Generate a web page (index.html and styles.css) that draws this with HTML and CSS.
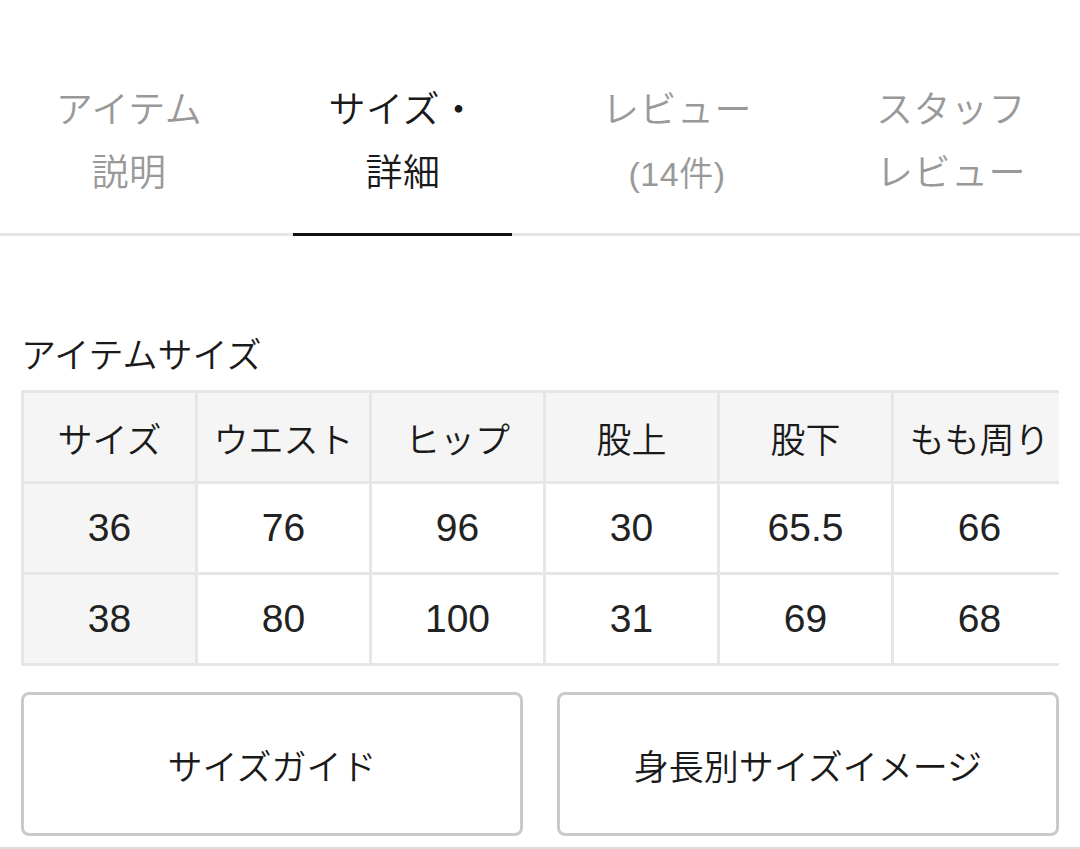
FILE: index.html
```html
<!DOCTYPE html>
<html lang="ja">
<head>
<meta charset="utf-8">
<title>サイズ・詳細</title>
<link rel="stylesheet" href="styles.css">
</head>
<body>
<nav class="tabs">
  <div class="tab">アイテム<br>説明</div>
  <div class="tab active">サイズ・<br>詳細</div>
  <div class="tab">レビュー<br><span class="count">(14件)</span></div>
  <div class="tab">スタッフ<br>レビュー</div>
</nav>
<section class="size-section">
  <h2 class="heading">アイテムサイズ</h2>
  <div class="table-wrap">
    <table class="size-table">
      <thead>
        <tr><th>サイズ</th><th>ウエスト</th><th>ヒップ</th><th>股上</th><th>股下</th><th>もも周り</th></tr>
      </thead>
      <tbody>
        <tr><th class="num">36</th><td>76</td><td>96</td><td>30</td><td>65.5</td><td>66</td></tr>
        <tr><th class="num">38</th><td>80</td><td>100</td><td>31</td><td>69</td><td>68</td></tr>
      </tbody>
    </table>
  </div>
  <div class="buttons">
    <button class="btn">サイズガイド</button>
    <button class="btn">身長別サイズイメージ</button>
  </div>
</section>
<div class="divider"></div>
</body>
</html>
```
FILE: styles.css
```css
html, body {
  margin: 0;
  padding: 0;
  background: #fff;
}
body {
  font-family: "Liberation Sans", "Noto Sans CJK JP", sans-serif;
  font-weight: 350;
  color: #1a1a1a;
  width: 1080px;
  height: 849px;
  overflow: hidden;
}
.tabs {
  display: flex;
  height: 233px;
  border-bottom: 3px solid #e6e6e6;
  margin-left: -8px;
  width: 1096px;
}
.tab {
  position: relative;
  flex: 1;
  padding-top: 79px;
  text-align: center;
  font-size: 37px;
  line-height: 63px;
  color: #999;
  letter-spacing: 0.5px;
}
.tab .count {
  font-size: 34px;
}
.tab.active {
  color: #1a1a1a;
}
.tab.active::after {
  content: "";
  position: absolute;
  left: 27px;
  right: 28px;
  bottom: -3px;
  height: 3px;
  background: #111;
}
.size-section {
  padding: 95px 21px 0;
}
.heading {
  margin: 0;
  font-weight: 350;
  font-size: 35px;
  line-height: 50px;
  height: 59px;
}
.table-wrap {
  width: 1038px;
  overflow: hidden;
}
.size-table {
  border-collapse: collapse;
  table-layout: fixed;
  width: 1047px;
}
.size-table th,
.size-table td {
  border: 3px solid #e6e6e6;
  height: 88px;
  padding: 0;
  text-align: center;
  vertical-align: middle;
  font-weight: 350;
  font-size: 35px;
  white-space: nowrap;
}
.size-table thead th {
  background: #f5f5f5;
}
.size-table tbody th,
.size-table td {
  font-size: 39px;
  color: #222;
}
.size-table tbody th {
  background: #f5f5f5;
}
.buttons {
  display: flex;
  gap: 34px;
  margin-top: 26px;
}
.btn {
  flex: 1;
  height: 144px;
  background: #fff;
  border: 3px solid #cacaca;
  border-radius: 8px;
  font-family: inherit;
  font-weight: 350;
  font-size: 35px;
  color: #1a1a1a;
  padding: 0;
}
.divider {
  margin-top: 11px;
  height: 3px;
  background: #dedede;
}
```
